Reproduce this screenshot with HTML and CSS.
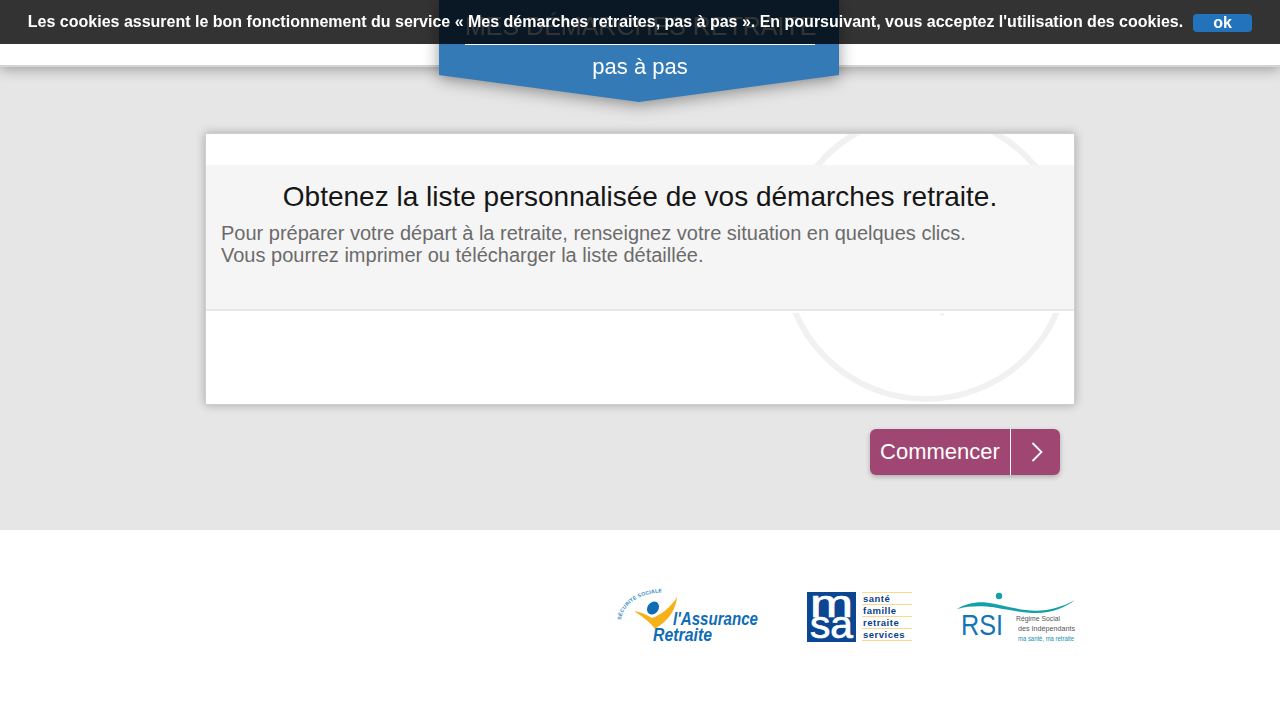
FILE: index.html
```html
<!DOCTYPE html>
<html lang="fr">
<head>
    <meta charset="UTF-8">
    <title>Mes démarches retraite</title>
    <link rel="stylesheet" href="styles.css">
</head>
<body>
    <div class="cookie-bar">
        <span class="cookie-text">Les cookies assurent le bon fonctionnement du service « Mes démarches retraites, pas à pas ». En poursuivant, vous acceptez l'utilisation des cookies.</span>
        <a class="cookie-ok">ok</a>
    </div>

    <header class="top-bar"></header>

    <div class="banner-shadow">
        <div class="banner">
            <div class="banner-title">MES DÉMARCHES RETRAITE</div>
            <div class="banner-sub">pas à pas</div>
        </div>
    </div>

    <main class="main">
        <section class="card">
            <svg class="card-circle" width="300" height="300" viewBox="0 0 300 300">
                <circle cx="150" cy="150" r="142" fill="none" stroke="#f1f1f1" stroke-width="6"/>
                <ellipse cx="166" cy="207.5" rx="2.5" ry="1" fill="#eee"/>
            </svg>
            <div class="intro">
                <h1 class="intro-title">Obtenez la liste personnalisée de vos démarches retraite.</h1>
                <p class="intro-text">Pour préparer votre départ à la retraite, renseignez votre situation en quelques clics.<br>Vous pourrez imprimer ou télécharger la liste détaillée.</p>
            </div>
        </section>
        <div class="actions">
            <a class="start-btn">
                <span class="start-label">Commencer</span>
                <span class="start-arrow">
                    <svg width="14" height="20" viewBox="0 0 14 20"><path d="M3.5 1 L12.5 10 L3.5 19" fill="none" stroke="#fff" stroke-width="1.8"/></svg>
                </span>
            </a>
        </div>
    </main>

    <footer class="footer">
        <svg class="logo logo-car" width="142" height="60" viewBox="0 0 142 60">
            <defs><path id="arc" d="M2 33 C3 20 18 5 48 5"/></defs>
            <text class="car-small"><textPath href="#arc">SÉCURITÉ SOCIALE</textPath></text>
            <path d="M15 24 C22 25 28 28 33 31 C42 28 52 20 58 10 C57 23 49 34 36 42 C32 36 24 30 15 24 Z" fill="#f6b21b"/>
            <ellipse cx="34" cy="21" rx="5.5" ry="7" transform="rotate(35 34 21)" fill="#0f6db4"/>
            <text class="car-big" x="54" y="38" textLength="85" lengthAdjust="spacingAndGlyphs">l'Assurance</text>
            <text class="car-big" x="34" y="54" textLength="59" lengthAdjust="spacingAndGlyphs">Retraite</text>
        </svg>
        <svg class="logo logo-msa" width="105" height="50" viewBox="0 0 105 50">
            <rect x="0" y="0" width="49" height="50" fill="#0b4692"/>
            <text class="msa-mark" x="3" y="25" textLength="43" lengthAdjust="spacingAndGlyphs">m</text>
            <text class="msa-mark" x="3" y="46" textLength="43" lengthAdjust="spacingAndGlyphs">sa</text>
            <path d="M55 .5H105M55 12.5H105M55 24.5H105M55 36.5H105M55 48.5H105" stroke="#fbd98a" stroke-width="1"/>
            <text class="msa-word" x="56" y="9.5">santé</text>
            <text class="msa-word" x="56" y="21.5">famille</text>
            <text class="msa-word" x="56" y="33.5">retraite</text>
            <text class="msa-word" x="56" y="45.5">services</text>
        </svg>
        <svg class="logo logo-rsi" width="120" height="52" viewBox="0 0 120 52">
            <circle cx="43" cy="5" r="3.2" fill="#12a0aa"/>
            <path d="M1 18 C9 13 20 10.5 30 11.5 C50 14 68 22 90 19 C102 17 112 13 119 9 C110 16 95 23 76 22 C58 21 44 16.5 30 15.5 C20 15 10 15.5 1 18 Z" fill="#12a0aa"/>
            <text class="rsi-mark" x="5" y="44" textLength="42" lengthAdjust="spacingAndGlyphs">RSI</text>
            <text class="rsi-small" x="60" y="30" textLength="44" lengthAdjust="spacingAndGlyphs">Régime Social</text>
            <text class="rsi-small" x="62" y="40" textLength="57" lengthAdjust="spacingAndGlyphs">des Indépendants</text>
            <text class="rsi-tag" x="62" y="50" textLength="56" lengthAdjust="spacingAndGlyphs">ma santé, ma retraite</text>
        </svg>
    </footer>
</body>
</html>
```

FILE: styles.css
```css
body {
    margin: 0;
    background: #fff;
    font-family: "Liberation Sans", Arial, sans-serif;
}

/* cookie notice over the top of the page */
.cookie-bar {
    position: fixed;
    top: 0;
    left: 0;
    right: 0;
    height: 44px;
    z-index: 10;
    background: rgba(0, 0, 0, 0.8);
    display: flex;
    justify-content: center;
    align-items: center;
    gap: 10px;
    color: #fff;
    font-weight: bold;
    font-size: 16px;
}
.cookie-ok {
    width: 59px;
    height: 18px;
    line-height: 18px;
    margin-top: 2px;
    border-radius: 4px;
    background: #2272bc;
    text-align: center;
}

.top-bar {
    position: relative;
    z-index: 2;
    height: 65px;
    background: #fff;
    border-bottom: 2px solid #d4d4d4;
    box-shadow: 0 3px 12px rgba(0, 0, 0, 0.3);
}

.banner-shadow {
    position: absolute;
    top: 0;
    left: 439px;
    width: 400px;
    z-index: 3;
    filter: drop-shadow(0 3px 8px rgba(0, 0, 0, 0.4));
}
.banner {
    height: 103px;
    background: #337ab7;
    color: #fff;
    text-align: center;
    clip-path: polygon(0 0, 100% 0, 100% 75px, 50% 102px, 0 75px);
}
.banner-title {
    margin: 0 24px 0 26px;
    height: 44px;
    line-height: 52px;
    font-size: 25px;
    border-bottom: 1px solid #fff;
    white-space: nowrap;
}
.banner-sub {
    padding-left: 2px;
    font-size: 22px;
    line-height: 44px;
}

.main {
    height: 397px;
    padding: 66px 205px 0;
    background: #e6e6e6;
}

.card {
    position: relative;
    height: 270px;
    overflow: hidden;
    background: #fff;
    border: 1px solid #cfcfcf;
    box-shadow: 0 0 9px rgba(0, 0, 0, 0.28);
}
.card-circle {
    position: absolute;
    left: 570px;
    top: -27px;
}
.intro {
    position: relative;
    box-sizing: border-box;
    height: 146px;
    margin-top: 31px;
    padding: 16px 15px 0;
    background: #f5f5f5;
    border-bottom: 2px solid #e8e8e8;
    box-shadow: 0 2px 0 #fff;
}
.intro-title {
    margin: 0 0 9px;
    font-size: 28px;
    font-weight: normal;
    line-height: 32px;
    text-align: center;
    color: #161616;
}
.intro-text {
    margin: 0;
    font-size: 20px;
    line-height: 22px;
    color: #6b6b6b;
}

.actions {
    display: flex;
    justify-content: flex-end;
    margin-top: 24px;
    padding-right: 15px;
}
.start-btn {
    display: flex;
    height: 46px;
    border-radius: 6px;
    background: #a04672;
    color: #fff;
    font-size: 22px;
    box-shadow: 0 2px 5px rgba(0, 0, 0, 0.25);
}
.start-label {
    width: 140px;
    line-height: 45px;
    text-align: center;
    border-right: 1px solid #fff;
}
.start-arrow {
    width: 49px;
    display: flex;
    justify-content: center;
    align-items: center;
}

.footer {
    display: flex;
    justify-content: flex-end;
    align-items: flex-start;
    padding: 57px 205px 0 0;
}
.logo {
    display: block;
    overflow: visible;
}
.logo-msa {
    margin: 5px 44px 0 46px;
}
.logo-rsi {
    margin: 4px -1px 0 0;
}

/* logo texts */
.car-small {
    font-family: "Liberation Sans", sans-serif;
    font-size: 5.2px;
    font-weight: bold;
    letter-spacing: .2px;
    fill: #3a8cc8;
}
.car-big {
    font-family: "Liberation Sans", sans-serif;
    font-size: 18px;
    font-weight: bold;
    font-style: italic;
    fill: #0f6db4;
}
.msa-mark {
    font-family: "Liberation Sans", sans-serif;
    font-size: 38px;
    fill: #fff;
    stroke: #fff;
    stroke-width: .7px;
}
.msa-word {
    font-family: "Liberation Sans", sans-serif;
    font-size: 9.5px;
    font-weight: bold;
    letter-spacing: .5px;
    fill: #0b3f8c;
}
.rsi-mark {
    font-family: "Liberation Sans", sans-serif;
    font-size: 30px;
    fill: #1474b4;
}
.rsi-small {
    font-family: "Liberation Sans", sans-serif;
    font-size: 8px;
    fill: #555;
}
.rsi-tag {
    font-family: "Liberation Sans", sans-serif;
    font-size: 7px;
    fill: #1a8fb0;
}
```
